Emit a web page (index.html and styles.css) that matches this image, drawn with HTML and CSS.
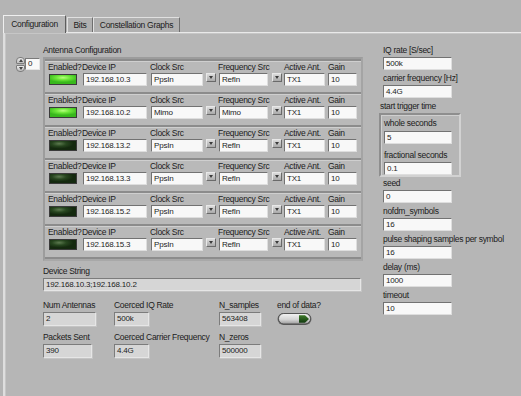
FILE: index.html
```html
<!DOCTYPE html>
<html>
<head>
<meta charset="utf-8">
<link rel="stylesheet" href="styles.css">
</head>
<body>
<div class="tabs">
  <div class="tab active t1">Configuration</div>
  <div class="tab t2">Bits</div>
  <div class="tab t3">Constellation Graphs</div>
</div>
<div class="panel">
  <div class="left">
    <div class="lbl indent">Antenna Configuration</div>
    <div class="arr-row">
      <div class="index">
        <div class="spin"><span class="sb up"></span><span class="sb dn"></span></div>
        <div class="idx">0</div>
      </div>
      <div class="array">
        <div class="el">
          <div class="lbl">Enabled?</div><div class="lbl">Device IP</div><div class="lbl">Clock Src</div><div class="lbl">Frequency Src</div><div class="lbl">Active Ant.</div><div class="lbl">Gain</div>
          <div class="led on"></div><div class="field ip">192.168.10.3</div><div class="ctl"><div class="field clk">PpsIn</div><div class="btn b1"></div></div><div class="ctl"><div class="field frq">RefIn</div><div class="btn b2"></div></div><div class="field ant">TX1</div><div class="field gain">10</div>
        </div>
        <div class="el">
          <div class="lbl">Enabled?</div><div class="lbl">Device IP</div><div class="lbl">Clock Src</div><div class="lbl">Frequency Src</div><div class="lbl">Active Ant.</div><div class="lbl">Gain</div>
          <div class="led on"></div><div class="field ip">192.168.10.2</div><div class="ctl"><div class="field clk">Mimo</div><div class="btn b1"></div></div><div class="ctl"><div class="field frq">Mimo</div><div class="btn b2"></div></div><div class="field ant">TX1</div><div class="field gain">10</div>
        </div>
        <div class="el">
          <div class="lbl">Enabled?</div><div class="lbl">Device IP</div><div class="lbl">Clock Src</div><div class="lbl">Frequency Src</div><div class="lbl">Active Ant.</div><div class="lbl">Gain</div>
          <div class="led off"></div><div class="field ip">192.168.13.2</div><div class="ctl"><div class="field clk">PpsIn</div><div class="btn b1"></div></div><div class="ctl"><div class="field frq">RefIn</div><div class="btn b2"></div></div><div class="field ant">TX1</div><div class="field gain">10</div>
        </div>
        <div class="el">
          <div class="lbl">Enabled?</div><div class="lbl">Device IP</div><div class="lbl">Clock Src</div><div class="lbl">Frequency Src</div><div class="lbl">Active Ant.</div><div class="lbl">Gain</div>
          <div class="led off"></div><div class="field ip">192.168.13.3</div><div class="ctl"><div class="field clk">PpsIn</div><div class="btn b1"></div></div><div class="ctl"><div class="field frq">RefIn</div><div class="btn b2"></div></div><div class="field ant">TX1</div><div class="field gain">10</div>
        </div>
        <div class="el">
          <div class="lbl">Enabled?</div><div class="lbl">Device IP</div><div class="lbl">Clock Src</div><div class="lbl">Frequency Src</div><div class="lbl">Active Ant.</div><div class="lbl">Gain</div>
          <div class="led off"></div><div class="field ip">192.168.15.2</div><div class="ctl"><div class="field clk">PpsIn</div><div class="btn b1"></div></div><div class="ctl"><div class="field frq">RefIn</div><div class="btn b2"></div></div><div class="field ant">TX1</div><div class="field gain">10</div>
        </div>
        <div class="el last">
          <div class="lbl">Enabled?</div><div class="lbl">Device IP</div><div class="lbl">Clock Src</div><div class="lbl">Frequency Src</div><div class="lbl">Active Ant.</div><div class="lbl">Gain</div>
          <div class="led off"></div><div class="field ip">192.168.15.3</div><div class="ctl"><div class="field clk">PpsIn</div><div class="btn b1"></div></div><div class="ctl"><div class="field frq">RefIn</div><div class="btn b2"></div></div><div class="field ant">TX1</div><div class="field gain">10</div>
        </div>
      </div>
    </div>
    <div class="lbl indent devlbl">Device String</div>
    <div class="ind devstr">192.168.10.3;192.168.10.2</div>
    <div class="stats">
      <div class="scol c1">
        <div class="lbl">Num Antennas</div>
        <div class="ind w53">2</div>
        <div class="lbl r2">Packets Sent</div>
        <div class="ind w49">390</div>
      </div>
      <div class="scol c2">
        <div class="lbl">Coerced IQ Rate</div>
        <div class="ind w35">500k</div>
        <div class="lbl r2">Coerced Carrier Frequency</div>
        <div class="ind w35">4.4G</div>
      </div>
      <div class="scol c3">
        <div class="lbl">N_samples</div>
        <div class="ind w42">563408</div>
        <div class="lbl r2">N_zeros</div>
        <div class="ind w42">500000</div>
      </div>
      <div class="scol c4">
        <div class="lbl">end of data?</div>
        <svg class="toggle" width="36" height="14" viewBox="0 0 36 14">
          <defs>
            <linearGradient id="tg" x1="0" y1="0" x2="0" y2="1">
              <stop offset="0" stop-color="#f4f4f4"/>
              <stop offset="0.6" stop-color="#d2d2d2"/>
              <stop offset="1" stop-color="#9a9a9a"/>
            </linearGradient>
            <linearGradient id="gg" x1="0" y1="0" x2="0" y2="1">
              <stop offset="0" stop-color="#3f7a2a"/>
              <stop offset="1" stop-color="#123a10"/>
            </linearGradient>
          </defs>
          <rect x="0.5" y="1" width="34" height="12" rx="6" ry="6" fill="#6a6a6a"/>
          <rect x="1.5" y="1.5" width="32" height="10.5" rx="5.2" ry="5.2" fill="url(#tg)" stroke="#3c3c3c" stroke-width="0.8"/>
          <path d="M22 3.2 L28 3.2 L32 7 L28 10.8 L22 10.8 Z" fill="url(#gg)"/>
        </svg>
      </div>
    </div>
  </div>
  <div class="right">
    <div class="lbl">IQ rate [S/sec]</div>
    <div class="field rf">500k</div>
    <div class="lbl">carrier frequency [Hz]</div>
    <div class="field rf">4.4G</div>
    <div class="lbl stt">start trigger time</div>
    <div class="cluster">
      <div class="lbl">whole seconds</div>
      <div class="field cf">5</div>
      <div class="lbl frac">fractional seconds</div>
      <div class="field cf">0.1</div>
    </div>
    <div class="lbl seed">seed</div>
    <div class="field rf">0</div>
    <div class="lbl">nofdm_symbols</div>
    <div class="field rf">16</div>
    <div class="lbl">pulse shaping samples per symbol</div>
    <div class="field rf">16</div>
    <div class="lbl">delay (ms)</div>
    <div class="field rf">1000</div>
    <div class="lbl">timeout</div>
    <div class="field rf">10</div>
  </div>
</div>
</body>
</html>
```

FILE: styles.css
```css
* { box-sizing: border-box; }

body {
  margin: 0;
  width: 521px;
  height: 396px;
  overflow: hidden;
  background: #b4b4b4;
  font-family: "Liberation Sans", Arial, sans-serif;
  font-size: 8.5px;
  letter-spacing: -0.3px;
  color: #1c1c1c;
}

/* ---------- tabs ---------- */
.tabs {
  display: flex;
  align-items: flex-end;
  height: 32px;
  padding: 15px 0 0 3px;
}

.tab {
  height: 15px;
  line-height: 14px;
  text-align: center;
  background: #b0b0b0;
  border-top: 1px solid #e0e0e0;
  border-left: 1px solid #e0e0e0;
  border-right: 1px solid #6e6e6e;
  white-space: nowrap;
}

.tab.active {
  position: relative;
  z-index: 1;
  height: 18px;
  margin-bottom: -1px;
  line-height: 17px;
  background: #b6b6b6;
  border-top: 1px solid #efefef;
  border-left: 1px solid #efefef;
  border-right: 1px solid #5e5e5e;
}

.t1 { width: 63px; }
.t2 { width: 26px; margin-left: 1px; }
.t3 { width: 87px; }

/* ---------- panel ---------- */
.panel {
  display: flex;
  gap: 20px;
  height: 364px;
  margin-left: 3px;
  padding: 12px 0 0 10px;
  background: #b6b6b6;
  border-top: 1px solid #e9e9e9;
  border-left: 2px solid #dedede;
  box-shadow: inset 1px 1px 0 #c6c6c6;
}

.lbl {
  height: 11px;
  line-height: 11px;
  white-space: nowrap;
}

.left {
  width: 348px;
  display: flex;
  flex-direction: column;
}

.indent { margin-left: 28px; }

.arr-row {
  display: flex;
  gap: 3px;
  margin-top: 1px;
}

/* index control */
.index {
  display: flex;
  align-items: flex-start;
  width: 25px;
}

.spin {
  display: flex;
  flex-direction: column;
  width: 9px;
  margin-left: 1px;
}

.sb {
  position: relative;
  display: block;
  width: 9px;
  height: 7px;
  background: linear-gradient(#ececec, #bdbdbd);
  border: 1px solid #7c7c7c;
}

.sb.up { border-radius: 4px 4px 1px 1px; }
.sb.dn { border-radius: 1px 1px 4px 4px; margin-top: 1px; }

.sb::after {
  content: "";
  position: absolute;
  left: 2px;
  top: 1px;
  border-left: 2px solid transparent;
  border-right: 2px solid transparent;
}

.sb.up::after { border-bottom: 3px solid #444; }
.sb.dn::after { border-top: 3px solid #444; }

.idx {
  width: 15px;
  height: 12px;
  margin-top: 1px;
  padding-left: 2px;
  line-height: 10px;
  font-size: 8px;
  background: #f9f9f9;
  border: 1px solid;
  border-color: #7a7a7a #e4e4e4 #e4e4e4 #7a7a7a;
}

/* array */
.array {
  width: 320px;
  border: 2px solid;
  border-color: #9c9c9c #a4a4a4 #a8a8a8 #9c9c9c;
  background: #a9a9a9;
}

.el {
  display: grid;
  grid-template-columns: 34px 68px 68px 66px 44px 1fr;
  grid-template-rows: 11px 13px;
  height: 33px;
  padding: 1px 0 0 3px;
  background: #b9b9b9;
  border-top: 2px solid #8c8c8c;
  box-shadow: inset 0 1px 0 #cfcfcf;
}

.el.last {
  height: 35px;
  border-bottom: 2px solid #8c8c8c;
}

.field {
  height: 13px;
  padding-left: 2px;
  line-height: 11px;
  font-size: 8px;
  letter-spacing: -0.2px;
  white-space: nowrap;
  overflow: hidden;
  background: #f8f8f8;
  border: 1px solid;
  border-color: #727272 #dedede #dedede #727272;
}

.led {
  width: 28px;
  height: 11px;
  margin: 1px 0 0 1px;
  border: 1px solid #3a3a3a;
}

.led.on {
  background: radial-gradient(ellipse 60% 50% at 50% 30%, #b8ff80 0%, #6ee83a 45%, #38b81c 100%);
}

.led.off {
  background: radial-gradient(ellipse 55% 55% at 35% 30%, #5d7a50 0%, #27461f 50%, #14290f 100%);
}

.ip { width: 64px; margin-left: 1px; }

.ctl { display: flex; align-items: flex-start; }

.clk { width: 52px; margin-left: 1px; }
.frq { width: 49px; margin-left: 1px; }
.ant { width: 41px; }
.gain { width: 29px; }

.btn {
  position: relative;
  width: 10px;
  height: 9px;
  background: linear-gradient(#dcdcdc, #a9a9a9);
  border: 1px solid;
  border-color: #e8e8e8 #6a6a6a #6a6a6a #e8e8e8;
}

.btn::after {
  content: "";
  position: absolute;
  left: 2px;
  top: 2px;
  border-left: 2px solid transparent;
  border-right: 2px solid transparent;
  border-top: 3px solid #3a3a3a;
}

.b1 { margin-left: 3px; }
.b2 { margin-left: 4px; }

/* indicators */
.ind {
  height: 14px;
  padding-left: 2px;
  line-height: 12px;
  font-size: 8px;
  letter-spacing: -0.2px;
  white-space: nowrap;
  background: #d6d6d6;
  border: 1px solid;
  border-color: #7c7c7c #e6e6e6 #e6e6e6 #7c7c7c;
  box-shadow: 1px 1px 0 #c4c4c4;
}

.devlbl { margin-top: 5px; }

.devstr {
  width: 318px;
  height: 13px;
  margin: 1px 0 0 28px;
}

.stats {
  display: flex;
  margin: 9px 0 0 28px;
}

.scol { display: flex; flex-direction: column; }
.scol .ind { margin-top: 1px; }
.scol .r2 { margin-top: 6px; }

.c1 { width: 71px; }
.c2 { width: 105px; }
.c3 { width: 58px; }

.w53 { width: 53px; }
.w49 { width: 49px; }
.w35 { width: 35px; }
.w42 { width: 42px; }

.toggle { display: block; margin-top: 1px; }

/* right column */
.right {
  display: flex;
  flex-direction: column;
  width: 130px;
}

.rf {
  width: 69px;
  margin: 1px 0 3px;
}

.stt { margin-left: -3px; }

.cluster {
  width: 82px;
  margin: 1px 0 0 -4px;
  padding: 3px 0 0 3px;
  border: 2px solid;
  border-color: #8e8e8e #d2d2d2 #d2d2d2 #8e8e8e;
  box-shadow: inset 1px 1px 0 #cfcfcf;
}

.cf { width: 68px; margin-top: 2px; }
.frac { margin-top: 6px; }
.cluster .frac + .cf { margin-top: 1px; }

.seed { margin-top: 1px; }
```
